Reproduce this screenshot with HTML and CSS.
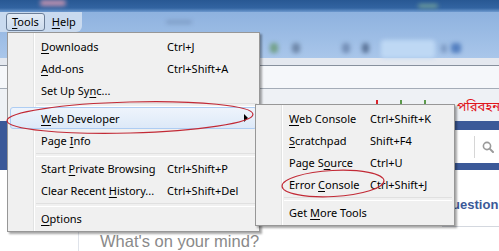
FILE: index.html
```html
<!DOCTYPE html>
<html lang="en">
<head>
  <meta charset="UTF-8">
  <title>Tools menu</title>
  <link rel="stylesheet" href="styles.css">
</head>
<body>
  <div class="screen">
    <div class="titlebar">
      <span class="blob pink"></span>
      <span class="blob green"></span>
    </div>
    <div class="toolbar">
      <div class="menurow">
        <div class="menubar">
          <span class="menubtn open"><u>T</u>ools</span>
          <span class="menubtn"><u>H</u>elp</span>
        </div>
        <span class="blob smudge"></span>
      </div>
      <div class="navrow">
        <span class="blob icon1"></span>
        <span class="blob icon2"></span>
        <span class="blob icon3"></span>
        <span class="blob icon4"></span>
        <span class="blob glow"></span>
        <span class="blob icon5"></span>
        <span class="blob icon6"></span>
      </div>
    </div>
    <div class="tabline"></div>
    <div class="addrbar"></div>
    <div class="bookmarks">
      <span class="tick red"></span>
      <span class="tick green"></span>
      <span class="tick green"></span>
      <span class="bm">পরিবহন</span>
    </div>
    <div class="fbhead">
      <div class="search">
        <span class="divider"></span>
        <svg class="glass" width="12" height="12" viewBox="0 0 12 12">
          <circle cx="5" cy="5" r="3.6" fill="none" stroke="#9a9a9a" stroke-width="1.6"/>
          <path d="M7.6 7.6 L11 11" stroke="#9a9a9a" stroke-width="2" stroke-linecap="round"/>
        </svg>
      </div>
    </div>
    <div class="page">
      <div class="leftcol"></div>
      <div class="composer">What's on your mind?</div>
      <div class="sidebar"><div class="ask">Question</div></div>
    </div>
  </div>

  <div class="menu tools">
    <div class="item"><span class="label"><u>D</u>ownloads</span><span>Ctrl+J</span></div>
    <div class="item"><span class="label"><u>A</u>dd-ons</span><span>Ctrl+Shift+A</span></div>
    <div class="item"><span class="label">Set Up Sy<u>n</u>c...</span></div>
    <div class="sep"></div>
    <div class="item hot"><span class="label"><u>W</u>eb Developer</span><span class="arrow"></span></div>
    <div class="item"><span class="label">Page <u>I</u>nfo</span></div>
    <div class="sep"></div>
    <div class="item"><span class="label">Start <u>P</u>rivate Browsing</span><span>Ctrl+Shift+P</span></div>
    <div class="item"><span class="label">Clear Recent <u>H</u>istory...</span><span>Ctrl+Shift+Del</span></div>
    <div class="sep"></div>
    <div class="item"><span class="label"><u>O</u>ptions</span></div>
  </div>

  <div class="menu sub">
    <div class="item"><span class="label"><u>W</u>eb Console</span><span>Ctrl+Shift+K</span></div>
    <div class="item"><span class="label"><u>S</u>cratchpad</span><span>Shift+F4</span></div>
    <div class="item"><span class="label">Page S<u>o</u>urce</span><span>Ctrl+U</span></div>
    <div class="item"><span class="label">Error <u>C</u>onsole</span><span>Ctrl+Shift+J</span></div>
    <div class="sep"></div>
    <div class="item"><span class="label">Get <u>M</u>ore Tools</span></div>
  </div>

  <svg class="marks" width="499" height="251" viewBox="0 0 499 251">
    <ellipse cx="130" cy="117.5" rx="123" ry="15.5" transform="rotate(-1.5 130 117.5)"/>
    <ellipse cx="333" cy="183.5" rx="51" ry="13" transform="rotate(-3 333 183.5)"/>
  </svg>
</body>
</html>
```

FILE: styles.css
```css
* {
  box-sizing: border-box;
}

body {
  margin: 0;
  width: 499px;
  height: 251px;
  overflow: hidden;
  position: relative;
  background: #fff;
  font-family: "Noto Sans", sans-serif;
  font-size: 11px;
  color: #000;
}

u {
  text-decoration-thickness: 1px;
  text-underline-offset: 2px;
}

.screen {
  display: flex;
  flex-direction: column;
  height: 251px;
}

/* blurred browser chrome behind the menus */
.blob {
  display: block;
  filter: blur(2px);
  border-radius: 3px;
}

.titlebar {
  height: 12px;
  display: flex;
  background: linear-gradient(#285893, #3264a1 8px, #6d99cf 12px);
  overflow: hidden;
}

.pink {
  width: 26px;
  height: 6px;
  margin-left: 40px;
  background: #b98fae;
}

.titlebar .green {
  width: 20px;
  height: 4px;
  margin: 4px 0 0 352px;
  background: #6f9e9a;
}

.toolbar {
  height: 46px;
  background: linear-gradient(#8eb2df, #a9c6ea);
}

.menurow {
  height: 20px;
  display: flex;
  align-items: center;
}

.menubar {
  width: 82px;
  height: 20px;
  display: flex;
  align-items: center;
  gap: 1px;
  padding-left: 6px;
  background: #c9daef;
  border-radius: 0 0 6px 0;
}

.menubtn {
  height: 18px;
  line-height: 16px;
  padding: 0 5px;
  border: 1px solid transparent;
  border-radius: 3px;
}

.menubtn.open {
  border-color: #6b7e98;
  background: linear-gradient(#e2ebf6, #ccdbed);
}

.smudge {
  width: 26px;
  height: 4px;
  margin-left: 84px;
  background: #7f9ec6;
}

.navrow {
  height: 26px;
  display: flex;
  align-items: center;
}

.icon1 {
  width: 8px;
  height: 10px;
  margin: 6px 0 0 270px;
  background: #73a18a;
}

.icon2 {
  width: 8px;
  height: 10px;
  margin: 6px 0 0 14px;
  background: #6f88aa;
}

.icon3 {
  width: 8px;
  height: 10px;
  margin: 6px 0 0 42px;
  background: #7590b8;
}

.icon4 {
  width: 7px;
  height: 10px;
  margin: 6px 0 0 12px;
  background: #5c7599;
}

.glow {
  width: 54px;
  height: 18px;
  margin: 8px 0 0 12px;
  background: #bed8f4;
}

.icon5 {
  width: 6px;
  height: 9px;
  margin: 6px 0 0 6px;
  background: #7c9ac4;
}

.icon6 {
  width: 10px;
  height: 10px;
  margin: 6px 0 0 4px;
  background: #5580c0;
}

.tabline {
  height: 8px;
  background: #e4e8ef;
  border-bottom: 1px solid #87909d;
}

.addrbar {
  height: 23px;
  background: #f5f7fa;
  border-bottom: 1px solid #a4acb7;
}

.bookmarks {
  height: 32px;
  display: flex;
  align-items: flex-start;
  padding: 10px 0 0 376px;
  background: #eef1f5;
  overflow: hidden;
}

/* tops of bookmark labels peeking above the submenu */
.tick {
  flex: none;
  width: 2px;
  height: 8px;
  margin-top: 1px;
}

.tick.red {
  background: #d9232a;
}

.tick.green {
  margin-left: 22px;
  background: #5c9a4c;
}

.bm {
  flex: none;
  margin-left: 31px;
  color: #e0141b;
  font-family: "Noto Sans Bengali", "Noto Sans", sans-serif;
  font-size: 13px;
  line-height: 18px;
}

.fbhead {
  height: 49px;
  padding-top: 9px;
  background: #3b5998;
}

.search {
  height: 33px;
  margin-left: 300px;
  display: flex;
  align-items: center;
  justify-content: flex-end;
  background: #fff;
}

.divider {
  width: 1px;
  height: 22px;
  margin-right: 7px;
  background: #d6d6d6;
}

.glass {
  margin-right: 5px;
}

.page {
  flex: 1;
  display: flex;
}

.leftcol {
  width: 79px;
  border-right: 1px solid #dfe3ea;
}

.composer {
  padding: 62px 0 0 21px;
  font-family: "Liberation Sans", sans-serif;
  font-size: 16.5px;
  color: #8a8a8a;
}

.sidebar {
  margin-left: auto;
  width: 57px;
  padding-top: 27px;
}

.ask {
  height: 30px;
  border-bottom: 1px solid #d4d8df;
  font-family: "Liberation Sans", sans-serif;
  font-weight: bold;
  font-size: 13px;
  color: #3b5998;
}

/* popup menus */
.menu {
  position: absolute;
  padding: 2px;
  border: 1px solid #979797;
  background: #f0f0f0 linear-gradient(to right, transparent 25px, #e2e3e3 25px, #e2e3e3 26px, #fff 26px, #fff 27px, transparent 27px);
  box-shadow: 2px 2px 2px rgba(0, 0, 0, 0.35);
}

.tools {
  left: 7px;
  top: 32px;
  width: 253px;
}

.sub {
  left: 255px;
  top: 104px;
  width: 200px;
}

.item {
  height: 22px;
  display: flex;
  align-items: center;
  padding-left: 30px;
  border: 1px solid transparent;
  border-radius: 3px;
}

.tools .label {
  width: 126px;
}

.sub .label {
  width: 81px;
}

.item.hot {
  border-color: #aecdf3;
  background: linear-gradient(#eef4fc, #dde9f8);
}

.arrow {
  margin-left: auto;
  margin-right: 8px;
  border-left: 4px solid #000;
  border-top: 4px solid transparent;
  border-bottom: 4px solid transparent;
}

.sep {
  height: 6px;
  margin-left: 26px;
  padding-top: 2px;
}

.sep::before {
  content: "";
  display: block;
  height: 2px;
  border-top: 1px solid #e0e0e0;
  border-bottom: 1px solid #fff;
}

.marks {
  position: absolute;
  left: 0;
  top: 0;
}

.marks ellipse {
  fill: none;
  stroke: #c22a36;
  stroke-width: 1.2;
}
```
